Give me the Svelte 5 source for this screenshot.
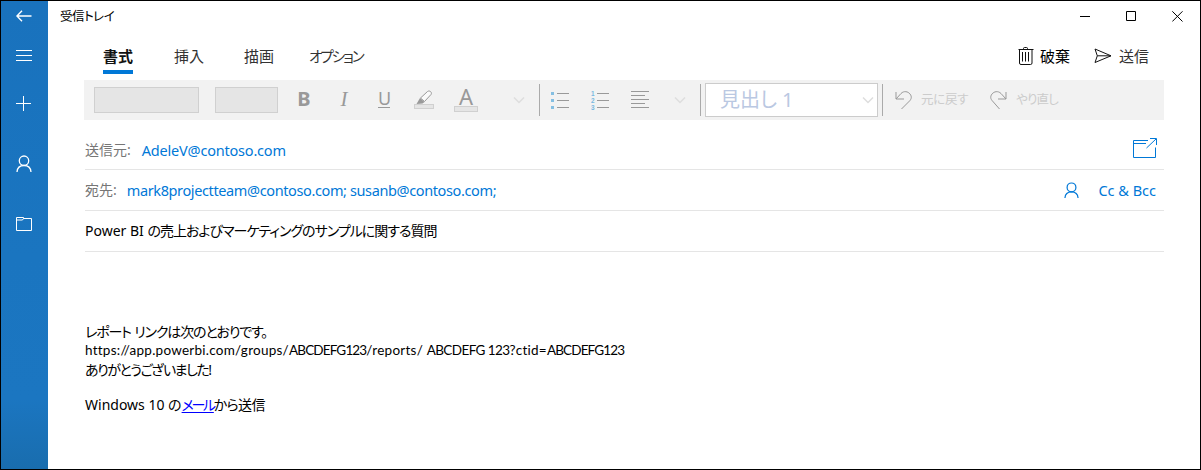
<script>
  const tabs = [
    { label: '書式', gap: 41, active: true },
    { label: '挿入', gap: 40 },
    { label: '描画', gap: 35 },
    { label: 'オプション', gap: 0, kana: true }
  ];
</script>

{#snippet person()}
  <svg class="person" width="16" height="18" viewBox="0 0 16 18">
    <circle cx="8" cy="5.7" r="4.7" />
    <path d="M1 17c.3-4 3-6.500 7-6.500s6.700 2.500 7 6.500" />
  </svg>
{/snippet}

{#snippet chevron()}
  <svg class="chevron" width="12" height="8" viewBox="0 0 12 8"><path d="m1 1.500 5 5 5-5" /></svg>
{/snippet}

<div class="window">
  <nav>
    <button class="back" aria-label="戻る"><svg width="16" height="12" viewBox="0 0 16 12"><path d="M15.500 6H1M6 .8 .9 6 6 11.200" /></svg></button>
    <button class="menu" aria-label="メニュー"><svg width="16" height="12" viewBox="0 0 16 12"><path d="M0 .5h16M0 5.500h16M0 10.500h16" /></svg></button>
    <button class="new" aria-label="新規"><svg width="16" height="16" viewBox="0 0 16 16"><path d="M0 7.500h15M7.500 0v15" /></svg></button>
    <button class="people" aria-label="連絡先">{@render person()}</button>
    <button class="folder" aria-label="フォルダー"><svg width="16" height="14" viewBox="0 0 16 14"><path d="M.5 13.500V.5H7.500V1.500H15.500V13.500zM.5 3H6.500L7.500 1.500" /></svg></button>
  </nav>

  <main>
    <header>
      <span class="title">受信トレイ</span>
      <div class="controls">
        <svg width="11" height="11" viewBox="0 0 11 11"><path d="M0 5.500h10" /></svg>
        <svg width="11" height="11" viewBox="0 0 11 11"><path d="M.5.5h9v9h-9z" /></svg>
        <svg width="11" height="11" viewBox="0 0 11 11"><path d="m.3.3 10.200 10.200M10.500.3.3 10.500" /></svg>
      </div>
    </header>

    <div class="tabs">
      {#each tabs as tab}
        <div class="tab" class:active={tab.active} class:kana={tab.kana} style="margin-right: {tab.gap}px">{tab.label}</div>
      {/each}
      <div class="actions">
        <svg width="16" height="18" viewBox="0 0 16 18"><path d="M.5 2.500h15M5.500 2.500V1.500q0-1 1-1h2q1 0 1 1v1M1.500 2.500V16q0 1.500 1.500 1.500h9.500q1.500 0 1.500-1.500V2.500M4.500 5v9.500M7.500 5v9.500M10.500 5v9.500" /></svg>
        <span class="discard">破棄</span>
        <svg width="18" height="16" viewBox="0 0 18 16"><path d="M1 1 17 7.800 1 14.500 3.300 7.800zM3.300 7.800H17" /></svg>
        <span class="send">送信</span>
      </div>
    </div>

    <div class="toolbar">
      <span class="box font"></span>
      <span class="box size"></span>
      <span class="glyph bold">B</span>
      <span class="glyph italic">I</span>
      <span class="glyph under">U</span>
      <svg class="pen" width="20" height="20" viewBox="0 0 20 20">
        <rect class="swatch" x=".5" y="14.500" width="19" height="4" />
        <path d="m6.500 8 7-6.500c2-1.500 5 .8 3.500 3l-6.500 7z" fill="#fafafa" /><path class="tip" d="m6 8 4.500 4-2 1.500L2.500 14z" />
      </svg>
      <span class="color"><span>A</span><i></i></span>
      <span class="chev1">{@render chevron()}</span>
      <span class="divider"></span>
      <svg class="list" width="19" height="18" viewBox="0 0 19 18"><path d="M6 2.500h12M6 9.500h12M6 16.500h12" /><path class="dots" d="M0 1h3v3H0zM0 8h3v3H0zM0 15h3v3H0z" /></svg>
      <svg class="numbers" width="19" height="25" viewBox="0 -2 19 25"><path d="M6 3.500h12M6 10.500h12M6 17.500h12" /><text x="0" y="6">1</text><text x="0" y="13">2</text><text x="0" y="20">3</text></svg>
      <svg class="align" width="18" height="18" viewBox="0 0 18 18"><path d="M0 .5h18M0 4.500h14M0 8.500h18M0 12.500h14M0 16.500h18" /></svg>
      <span class="chev2">{@render chevron()}</span>
      <span class="divider second"></span>
      <div class="style"><span>見出し 1</span>{@render chevron()}</div>
      <span class="divider third"></span>
      <svg class="undo" width="18" height="19" viewBox="0 0 18 19"><path d="M1 1v7h8M1 8 6 2.500C9-.5 13 .5 15 3s1.500 5-.5 7L6.500 18" /></svg>
      <span class="history">元に戻す</span>
      <svg class="redo" width="18" height="19" viewBox="0 0 18 19"><path d="M17 1v7H9M17 8l-5-5.500C9-.5 5 .5 3 3s-1.500 5 .5 7l7 8" /></svg>
      <span class="history again">やり直し</span>
    </div>

    <section class="fields">
      <div class="row from">
        <span class="label">送信元:</span><span class="address">AdeleV@contoso.com</span>
        <svg class="popout" width="24" height="21" viewBox="0 0 24 21"><path d="M15 2.500H.5V19.500H22.500V9.500M.5 5.500H13M17 .5H23.500V7M23 1 13.500 10" /></svg>
      </div>
      <div class="row to">
        <span class="label">宛先:</span><span class="address">mark8projectteam@contoso.com; susanb@contoso.com;</span>
        <span class="contact">{@render person()}</span><span class="cc">Cc &amp; Bcc</span>
      </div>
      <div class="row subject"><div>Power BI <span>の売上およびマーケティングのサンプルに関する質問</span></div></div>
    </section>

    <article>
      <p class="report">レポート リンクは次のとおりです。</p>
      <p class="url">https://app.powerbi.com/groups/<span>ABCDEFG123</span>/reports/ <span class="wide">ABCDEFG 123</span>?ctid=<span>ABCDEFG123</span></p>
      <p class="thanks">ありがとうございました!</p>
      <p class="signature">Windows 10 の<a href="#mail">メール</a><span>から送信</span></p>
    </article>
  </main>
</div>

<style>
  :global(body) { margin: 0; background: #fff; }
  .window {
    box-sizing: border-box; width: 1201px; height: 470px; border: 1px solid #000;
    display: flex; overflow: hidden; background: #fff; color: #000;
    font: 14px/20px "Noto Sans", "Noto Sans CJK JP", sans-serif;
    font-feature-settings: "palt"; white-space: nowrap;
  }
  svg { display: block; flex: none; fill: none; stroke: currentColor; stroke-width: 1; }
  nav {
    width: 47px; flex: none; display: flex; flex-direction: column; color: #fff;
    background: linear-gradient(#1972bd 0%, #1a75c0 55%, #1b76c1 85%, #196dae 100%);
  }
  button { display: flex; justify-content: flex-start; align-items: center; border: 0; padding: 0 0 0 15px; background: none; color: inherit; }
  .back { height: 29px; }
  .back svg { stroke-width: 1.4; }
  .menu { height: 51px; }
  .new { height: 46px; }
  .people { height: 73px; }
  .folder { height: 48px; }
  .person { stroke-width: 1.3; }
  main { flex: 1; min-width: 0; display: flex; flex-direction: column; }
  header { height: 31px; flex: none; display: flex; align-items: center; justify-content: space-between; padding: 0 17px 0 12px; }
  .title { font-size: 12.500px; letter-spacing: -0.5px; }
  .controls { display: flex; gap: 35px; }
  .tabs { height: 48px; flex: none; display: flex; padding: 9px 51px 0 55px; box-sizing: border-box; color: #333; }
  .tab { height: 33px; line-height: 30px; font-size: 15px; box-sizing: border-box; }
  .active { font-weight: 700; color: #111; border-bottom: 4px solid #0078d7; }
  .kana { font-size: 14.500px; letter-spacing: -2px; }
  .actions { height: 32px; margin-left: auto; display: flex; align-items: center; font-size: 15px; color: #111; }
  .actions span { line-height: 20px; padding-bottom: 2px; }
  .actions svg { margin-bottom: 2px; }
  .discard { margin: 0 24px 0 6px; color: #000; }
  .send { margin-left: 7px; color: #333; }
  .toolbar { width: 1080px; height: 40px; flex: none; margin-left: 36px; padding-left: 10px; box-sizing: border-box; background: #f2f2f2; display: flex; align-items: center; color: #999; }
  .box { height: 26px; box-sizing: border-box; border: 1px solid #d0d0d0; background: #e5e5e5; }
  .font { width: 105px; }
  .size { width: 63px; margin-left: 16px; }
  .glyph { font-size: 20px; line-height: 24px; text-align: center; }
  .bold { width: 20px; margin-left: 16px; padding-bottom: 2px; font-weight: 700; }
  .italic { width: 20px; margin-left: 20px; padding-bottom: 2px; font-family: "Liberation Serif", serif; font-style: italic; font-size: 21px; }
  .under { width: 12px; margin: 0 0 2px 24px; font-size: 18px; line-height: 17px; border-bottom: 1px solid #999; }
  .pen { margin-left: 24px; }
  .swatch { fill: #e5e5e5; stroke: #d0d0d0; }
  .tip { fill: #999; stroke: none; }
  .color { width: 24px; height: 24px; margin-left: 20px; text-align: center; font-size: 22px; line-height: 16px; }
  .color span { display: block; height: 18px; }
  .color i { display: block; height: 6px; box-sizing: border-box; border: 1px solid #d0d0d0; background: #e5e5e5; }
  .chevron { color: #dedede; stroke-width: 1.500; }
  .chev1 { margin-left: 35px; }
  .divider { width: 1px; height: 32px; background: #aaa; margin-left: 14px; }
  .list { margin-left: 11px; }
  .dots { fill: #85bfe2; stroke: none; }
  .numbers { margin-left: 21px; }
  .numbers text { font: 700 6.400px "Liberation Sans", sans-serif; fill: #78b8e0; stroke: none; }
  .align { margin-left: 21px; }
  .chev2 { margin-left: 25px; }
  .style { width: 173px; height: 34px; margin-left: 4px; box-sizing: border-box; border: 1px solid #ccc; background: #fff; display: flex; align-items: center; justify-content: space-between; padding: 0 3px 0 14px; color: #bac8e2; font-size: 20px; }
  .third { margin-left: 4px; }
  .undo { margin-left: 12px; }
  .history { width: 48px; margin-left: 8px; font-size: 12.500px; letter-spacing: -0.3px; color: #ccc; }
  .again { letter-spacing: -0.8px; margin-left: 9px; }
  .redo { margin-left: 20px; }
  .fields { padding: 9px 0 0 37px; width: 1079px; }
  .row { height: 41px; box-sizing: border-box; border-bottom: 1px solid #e5e5e5; display: flex; align-items: center; }
  .from span { padding-top: 2px; }
  .label { color: #767676; }
  .address, .cc, .contact { color: #0078d7; }
  .address { font-size: 14.500px; }
  .from .address { margin-left: 11px; letter-spacing: -0.2px; }
  .to .address { margin-left: 10px; letter-spacing: -0.380px; }
  .subject span { letter-spacing: -1px; }
  .popout { margin: 0 7px 1px auto; color: #0078d7; }
  .contact { margin-left: auto; }
  .contact svg { width: 15px; height: 17px; }
  .cc { margin: 0 8px 0 19px; font-size: 14.500px; }
  article { padding: 70px 0 0 37px; }
  p { margin: 0; }
  .report { height: 20px; letter-spacing: -1.150px; word-spacing: 1px; }
  .url { height: 18px; line-height: 17px; font-family: Lato, sans-serif; font-size: 13.500px; letter-spacing: .25px; }
  .url span { letter-spacing: -0.850px; }
  .url .wide { letter-spacing: -0.600px; }
  .thanks { letter-spacing: -1.500px; }
  .signature { margin-top: 15px; }
  .signature span { letter-spacing: -0.7px; }
  a { color: #00f; text-decoration: underline; text-underline-offset: 2px; letter-spacing: -2.300px; }
</style>
